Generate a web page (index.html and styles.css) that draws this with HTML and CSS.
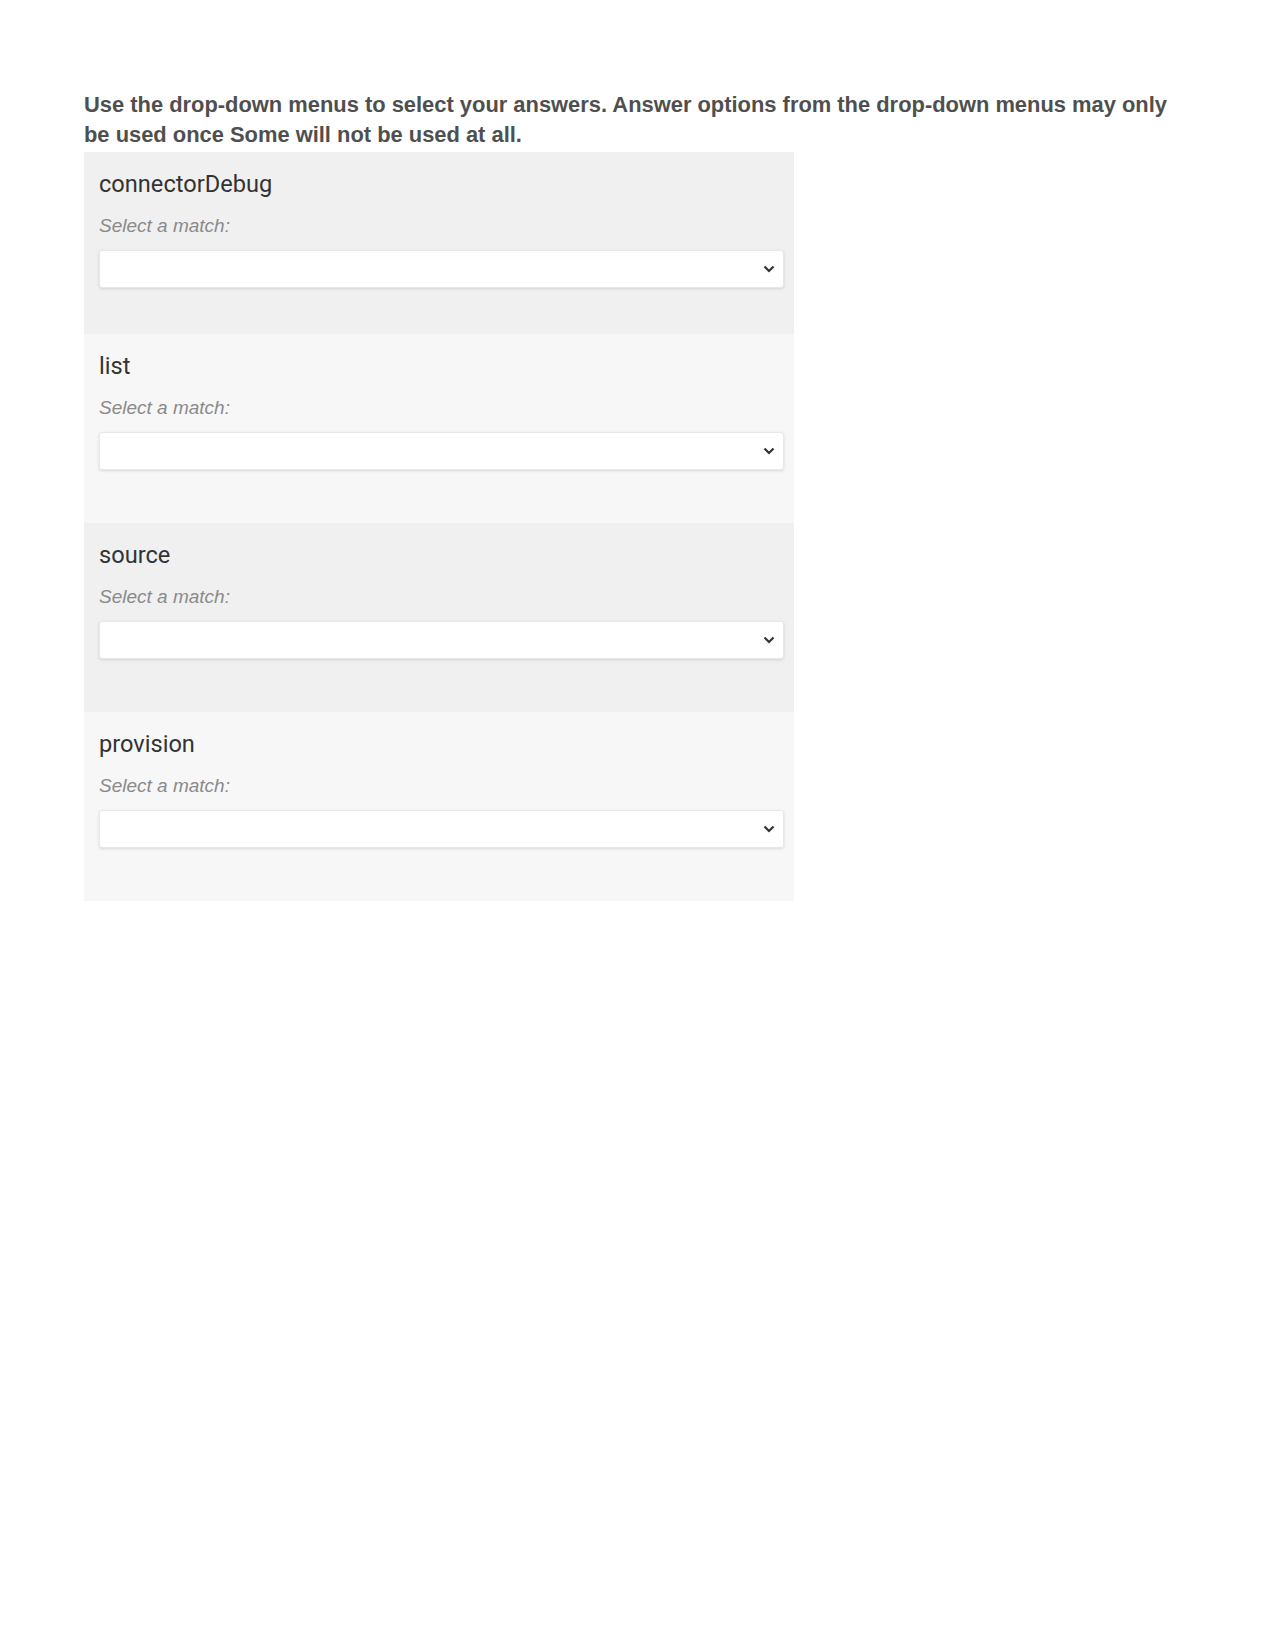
FILE: index.html
```html
<!DOCTYPE html>
<html lang="en">
<head>
  <meta charset="UTF-8" />
  <meta name="viewport" content="width=device-width, initial-scale=1" />
  <title>Matching Question</title>
  <link rel="stylesheet" href="styles.css">
</head>
<body>
  <div class="page">
    <p class="prompt">Use the drop-down menus to select your answers. Answer options from the drop-down menus may only be used once Some will not be used at all.</p>

    <div class="match-list">
      <div class="match-item">
        <div class="term">connectorDebug</div>
        <div class="hint">Select a match:</div>
        <div class="select-wrap">
          <select><option value=""></option></select>
          <svg class="chevron" width="12" height="8" viewBox="0 0 12 8"><path d="M1.5 1.5 L6 6 L10.5 1.5" fill="none" stroke="#333" stroke-width="2.2"/></svg>
        </div>
      </div>

      <div class="match-item">
        <div class="term">list</div>
        <div class="hint">Select a match:</div>
        <div class="select-wrap">
          <select><option value=""></option></select>
          <svg class="chevron" width="12" height="8" viewBox="0 0 12 8"><path d="M1.5 1.5 L6 6 L10.5 1.5" fill="none" stroke="#333" stroke-width="2.2"/></svg>
        </div>
      </div>

      <div class="match-item">
        <div class="term">source</div>
        <div class="hint">Select a match:</div>
        <div class="select-wrap">
          <select><option value=""></option></select>
          <svg class="chevron" width="12" height="8" viewBox="0 0 12 8"><path d="M1.5 1.5 L6 6 L10.5 1.5" fill="none" stroke="#333" stroke-width="2.2"/></svg>
        </div>
      </div>

      <div class="match-item">
        <div class="term">provision</div>
        <div class="hint">Select a match:</div>
        <div class="select-wrap">
          <select><option value=""></option></select>
          <svg class="chevron" width="12" height="8" viewBox="0 0 12 8"><path d="M1.5 1.5 L6 6 L10.5 1.5" fill="none" stroke="#333" stroke-width="2.2"/></svg>
        </div>
      </div>
    </div>
  </div>
</body>
</html>
```

FILE: styles.css
```css
body {
  margin: 0;
  background-color: #fff;
  font-family: Roboto, "Liberation Sans", Arial, sans-serif;
}
.page {
  padding: 90px 84px 0 84px;
}
.prompt {
  margin: 0 0 3px 0;
  max-width: 1100px;
  font-family: "Liberation Sans", Arial, sans-serif;
  font-weight: bold;
  font-size: 21.9px;
  line-height: 29.5px;
  color: #4f4f4f;
}
.match-list {
  width: 710px;
}
.match-item {
  padding: 18px 10px 53px 15px;
  background-color: #f0f0f0;
}
.match-item:first-child {
  padding-bottom: 46px;
}
.match-item:nth-child(even) {
  background-color: #f7f7f7;
}
.term {
  font-size: 23.6px;
  line-height: 28px;
  color: #333;
}
.hint {
  margin-top: 16px;
  font-family: "Liberation Sans", Arial, sans-serif;
  font-size: 19px;
  line-height: 24px;
  font-style: italic;
  color: #8a8a8a;
}
.select-wrap {
  position: relative;
  margin-top: 12px;
}
.select-wrap select {
  display: block;
  width: 100%;
  height: 38px;
  -webkit-appearance: none;
  appearance: none;
  background-color: #fff;
  border: 1px solid #e8e8e8;
  border-radius: 3px;
  box-shadow: 0 1px 3px rgba(0,0,0,0.12);
}
/* chevron sits over the native select */
.select-wrap .chevron {
  position: absolute;
  right: 9px;
  top: 15px;
  pointer-events: none;
}
```
